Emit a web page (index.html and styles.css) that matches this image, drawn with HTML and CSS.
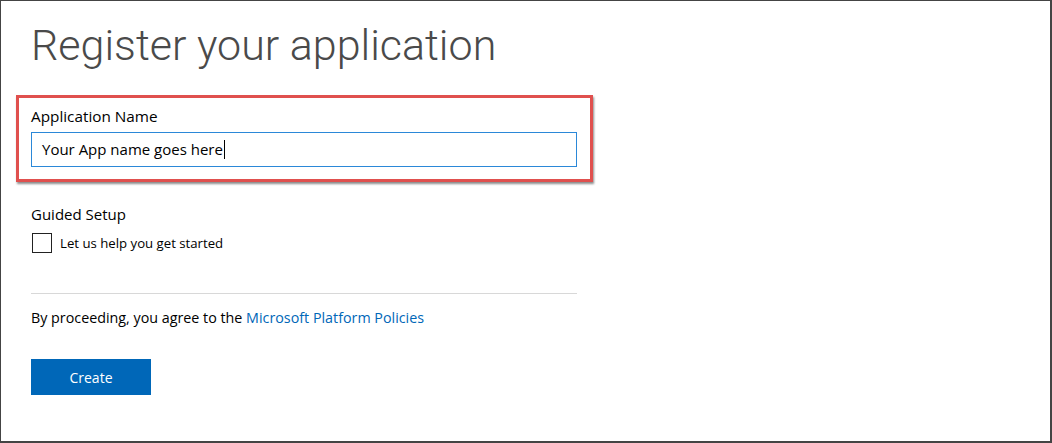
FILE: index.html
```html
<!DOCTYPE html>
<html lang="en">
<head>
<meta charset="utf-8">
<title>Register your application</title>
<link rel="stylesheet" href="styles.css">
</head>
<body>
<div class="frame">
  <div class="content">
    <h1 class="title">Register your application</h1>
    <div class="highlight">
      <label class="label" for="appname">Application Name</label>
      <div class="textbox" id="appname" role="textbox">Your App name goes here<span class="caret"></span></div>
    </div>
    <div class="section-label">Guided Setup</div>
    <label class="check-row">
      <span class="checkbox"></span>
      <span class="check-text">Let us help you get started</span>
    </label>
    <div class="divider"></div>
    <p class="agree">By proceeding, you agree to the <a class="link" href="#">Microsoft Platform Policies</a></p>
    <button class="btn" type="button">Create</button>
  </div>
</div>
</body>
</html>
```

FILE: styles.css
```css
html, body {
  margin: 0;
  padding: 0;
  background: #fff;
}
.frame {
  width: 1052px;
  height: 443px;
  box-sizing: border-box;
  border-style: solid;
  border-color: #444;
  border-width: 1px 2px 2px 1px;
  background: #fff;
  overflow: hidden;
  font-family: "Open Sans", "Liberation Sans", sans-serif;
  color: #000;
}
.content {
  padding-left: 30px;
  width: 546px;
}
.title {
  margin: 0;
  height: 94px;
  padding-top: 14px;
  box-sizing: border-box;
  font-family: Roboto, "Liberation Sans", sans-serif;
  font-weight: 300;
  font-size: 43px;
  line-height: 60px;
  color: #4a4a4a;
}
.highlight {
  margin-left: -15px;
  margin-right: -16px;
  border: 3px solid #e0504e;
  padding: 8px 13px 12px 12px;
  box-shadow: 1px 2px 2px rgba(0, 0, 0, 0.45);
}
.label {
  display: block;
  font-size: 15.3px;
  line-height: 20px;
  height: 20px;
  margin-bottom: 6px;
}
.textbox {
  height: 35px;
  box-sizing: border-box;
  border: 1px solid #2b88d8;
  padding: 0 10px;
  font-size: 15px;
  line-height: 33px;
  display: flex;
  align-items: center;
}
.caret {
  display: inline-block;
  width: 1px;
  height: 19px;
  background: #000;
  margin-left: 1px;
}
.section-label {
  margin-top: 22px;
  font-size: 15px;
  line-height: 20px;
}
.check-row {
  margin-top: 9px;
  display: flex;
  align-items: center;
  gap: 8px;
  height: 20px;
}
.checkbox {
  width: 20px;
  height: 20px;
  box-sizing: border-box;
  border: 1px solid #222;
  margin-left: 1px;
}
.check-text {
  font-size: 13.2px;
  line-height: 20px;
}
.divider {
  margin-top: 40px;
  height: 1px;
  background: #d8d8d8;
}
.agree {
  margin: 14px 0 0;
  font-size: 14.3px;
  line-height: 20px;
}
.link {
  color: #0067b8;
  text-decoration: none;
}
.btn {
  display: block;
  margin-top: 31px;
  width: 120px;
  height: 36px;
  border: 0;
  padding: 0;
  background: #0067b8;
  color: #fff;
  font-family: "Open Sans", "Liberation Sans", sans-serif;
  font-size: 14px;
}
```
